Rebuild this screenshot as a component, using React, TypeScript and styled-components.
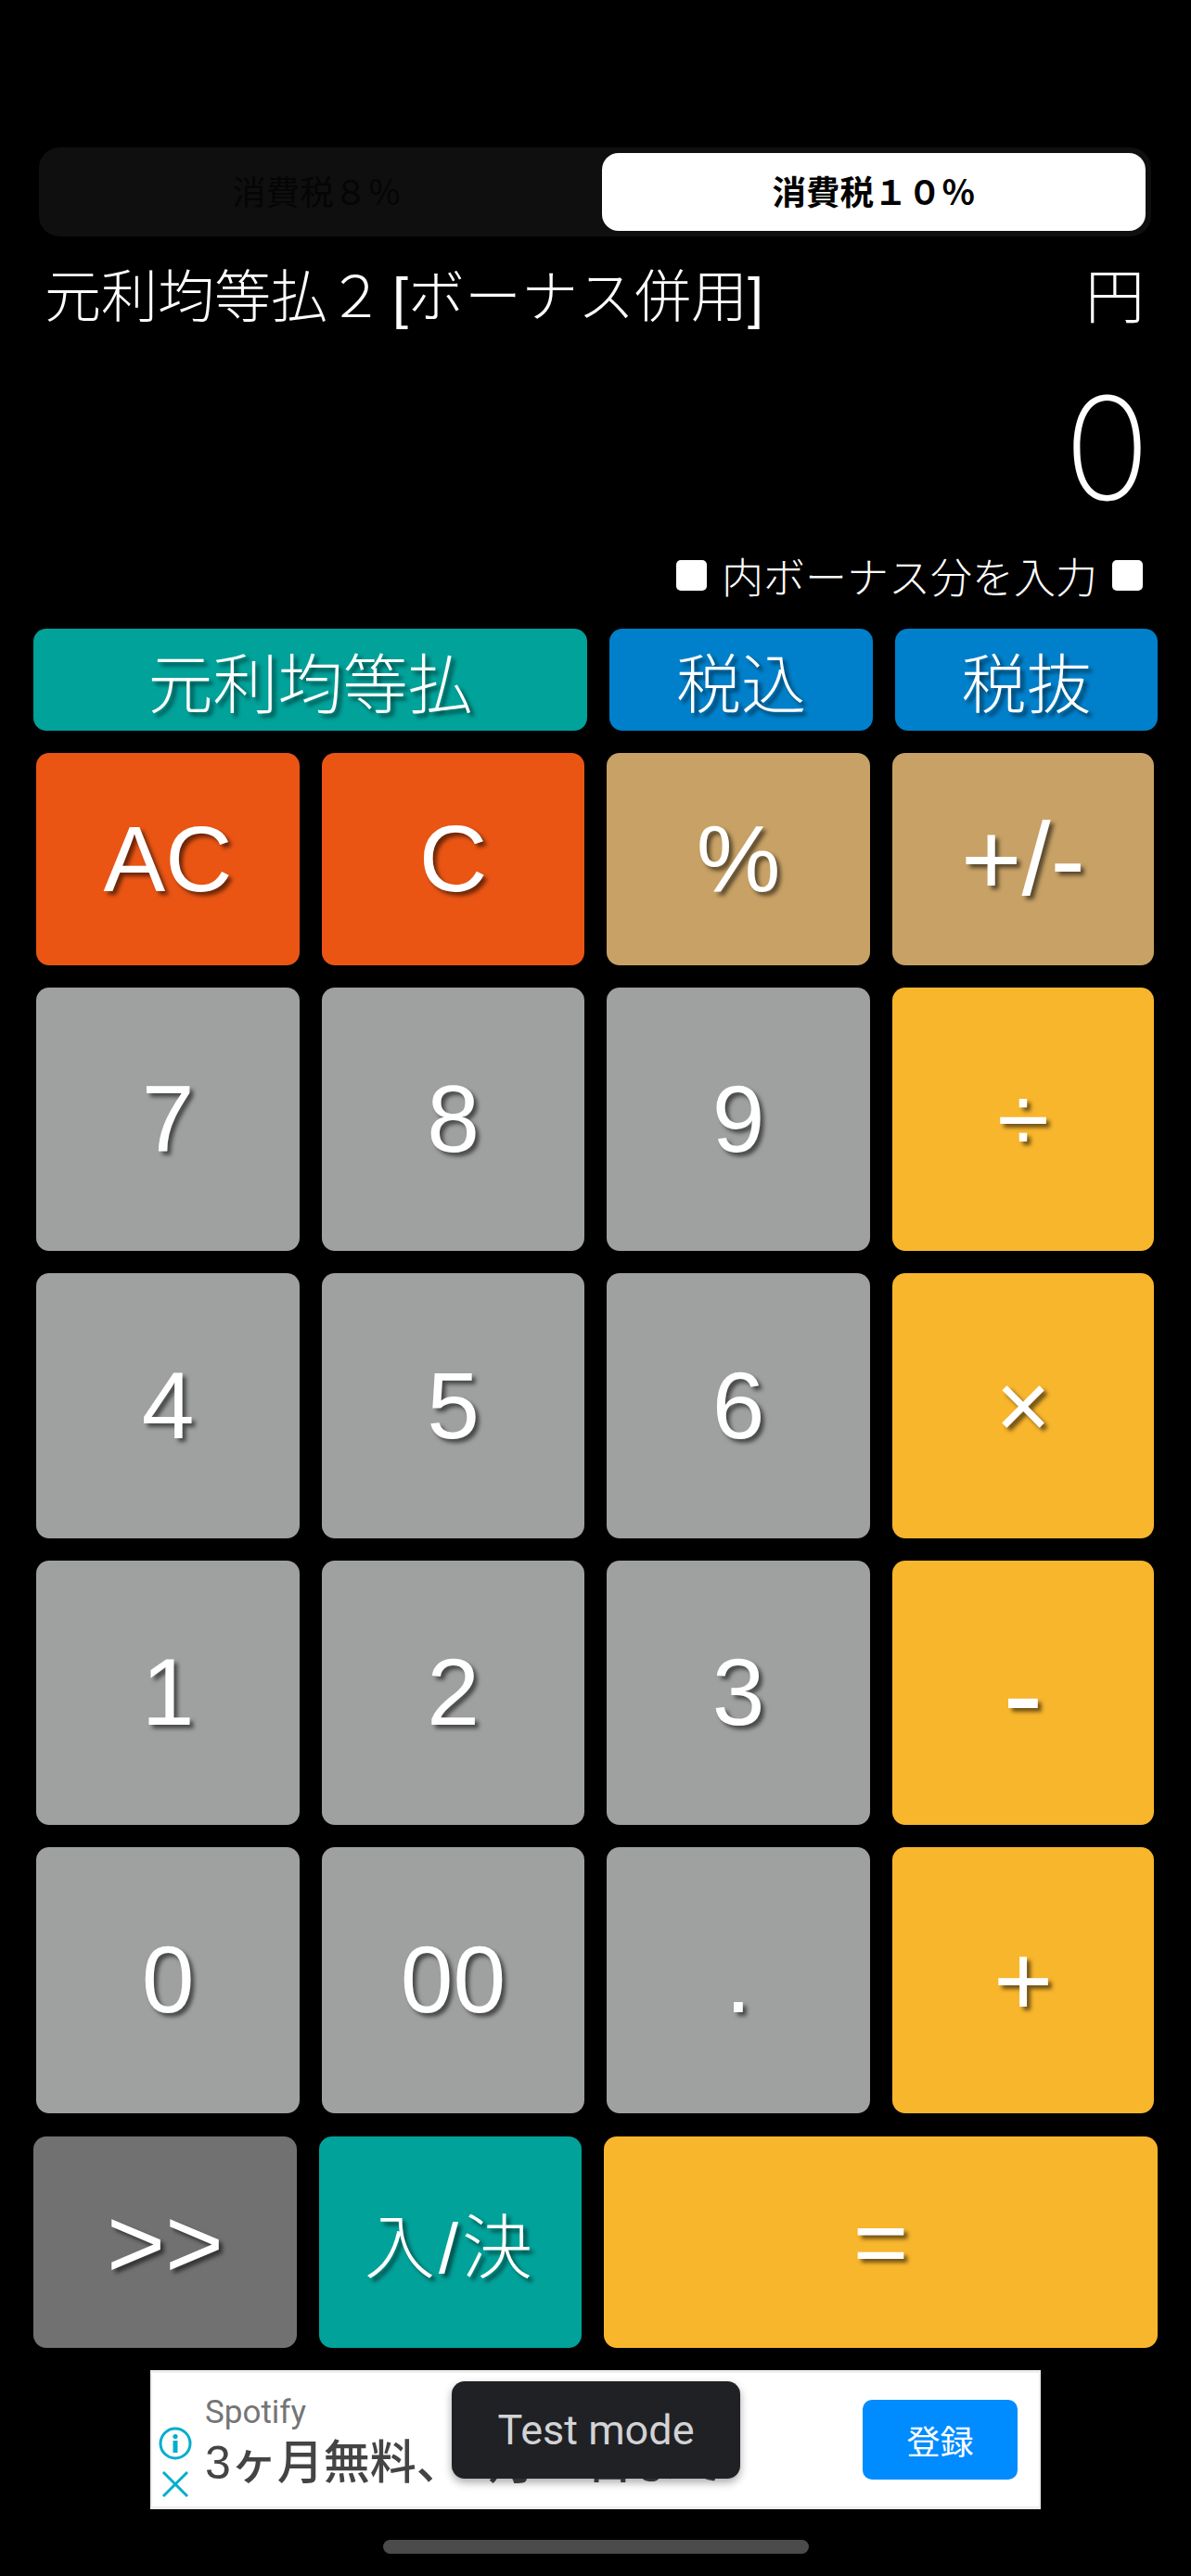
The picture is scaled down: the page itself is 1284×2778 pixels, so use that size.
import React from 'react';
import styled, { createGlobalStyle } from 'styled-components';

const GlobalStyle = createGlobalStyle`
  html, body {
    margin: 0;
    padding: 0;
    background: #000000;
  }
  body {
    font-family: "Liberation Sans", "Noto Sans CJK JP", sans-serif;
  }
`;

const COLORS = {
  orange: '#ea5514',
  tan: '#c7a165',
  gray: '#9fa0a0',
  amber: '#f8b62d',
  teal: '#00a29a',
  blue: '#0080cb',
  dark: '#727171',
};

const Screen = styled.div`
  width: 1284px;
  height: 2778px;
  background: #000000;
  color: #ffffff;
  display: flex;
  flex-direction: column;
  overflow: hidden;
  padding-top: 159px;
  box-sizing: border-box;
`;

const Segments = styled.div`
  margin: 0 43px 0 42px;
  height: 96px;
  box-sizing: border-box;
  padding: 6px;
  background: #0f0f0f;
  border-radius: 22px;
  display: grid;
  grid-template-columns: 1fr 586px;
`;

const Segment = styled.div<{ $active?: boolean }>`
  display: flex;
  align-items: center;
  justify-content: center;
  padding: ${(p) => (p.$active ? '0 0 3px' : '0 14px 3px 0')};
  border-radius: 18px;
  font-size: 36.5px;
  font-weight: ${(p) => (p.$active ? 700 : 400)};
  color: ${(p) => (p.$active ? '#000000' : '#050505')};
  background: ${(p) => (p.$active ? '#ffffff' : 'transparent')};
`;

const TitleRow = styled.div`
  margin-top: 25px;
  padding: 0 50px 0 48px;
  height: 70px;
  display: flex;
  justify-content: space-between;
  align-items: center;
  font-size: 61px;
  font-weight: 300;
  word-spacing: -8px;
  white-space: nowrap;
`;

const Currency = styled.span`
  font-size: 64px;
`;

const Display = styled.div`
  margin-top: 58px;
  padding-right: 44px;
  height: 150px;
  display: flex;
  justify-content: flex-end;
  align-items: center;
  font-family: "Inter", sans-serif;
  font-weight: 200;
  font-size: 154px;
  line-height: 150px;
`;

const BonusRow = styled.div`
  margin-top: 37px;
  padding-right: 52px;
  height: 50px;
  display: flex;
  justify-content: flex-end;
  align-items: center;
  gap: 16px;
  font-size: 45px;
  font-weight: 300;
`;

const Check = styled.span`
  width: 33px;
  height: 33px;
  border-radius: 5px;
  background: #ffffff;
`;

const ModeRow = styled.div`
  margin-top: 33px;
  padding: 0 36px;
  height: 110px;
  display: grid;
  grid-template-columns: 597px 284px 283px;
  gap: 24px;
`;

const Key = styled.div<{ $bg: string; $size?: number; $spacing?: number }>`
  display: flex;
  align-items: center;
  justify-content: center;
  background: ${(p) => p.$bg};
  border-radius: 14px;
  font-size: ${(p) => p.$size ?? 102}px;
  letter-spacing: ${(p) => p.$spacing ?? 0}px;
  font-weight: 300;
  text-shadow: 4px 4px 4px rgba(0, 0, 0, 0.55);
  white-space: nowrap;
`;

const KeyGrid = styled.div`
  margin-top: 24px;
  padding: 0 39px;
  display: grid;
  grid-template-columns: 284px 283px 284px 282px;
  grid-template-rows: 229px 284px 286px 285px 287px;
  column-gap: 24px;
  row-gap: 24px;
`;

const BottomRow = styled.div`
  margin-top: 25px;
  padding: 0 36px;
  height: 228px;
  display: grid;
  grid-template-columns: 284px 283px 597px;
  gap: 24px;
`;

const AdWrap = styled.div`
  position: relative;
  margin: 24px auto 0;
  width: 960px;
  height: 150px;
`;

const Ad = styled.div`
  height: 100%;
  box-sizing: border-box;
  background: #ffffff;
  border: 3px solid #eeeeee;
  border-left-width: 2px;
  border-right-width: 2px;
  display: flex;
  align-items: stretch;
  overflow: hidden;
`;

const AdIcons = styled.div`
  width: 50px;
  padding-bottom: 9px;
  display: flex;
  flex-direction: column;
  justify-content: flex-end;
  align-items: center;
  gap: 11px;
  color: #00aecd;
`;

const AdText = styled.div`
  flex: 1;
  padding: 23px 0 0 7px;
  white-space: nowrap;
  overflow: hidden;
`;

const AdBrand = styled.div`
  font-family: "Roboto", sans-serif;
  font-size: 35px;
  line-height: 40px;
  color: #757575;
`;

const AdHeadline = styled.div`
  font-size: 50px;
  line-height: 62px;
  margin-top: 3px;
  font-weight: 500;
  color: #444444;
`;

const AdButton = styled.div`
  flex: none;
  width: 167px;
  height: 86px;
  margin: 29px 23px 0 0;
  border-radius: 10px;
  background: #008bff;
  color: #ffffff;
  font-size: 36px;
  display: flex;
  align-items: center;
  justify-content: center;
`;

const Toast = styled.div`
  position: absolute;
  left: 325px;
  top: 12px;
  width: 311px;
  height: 105px;
  border-radius: 14px;
  background: #202124;
  color: #d2d3d6;
  font-family: "Roboto", sans-serif;
  font-size: 45px;
  display: flex;
  align-items: center;
  justify-content: center;
  box-shadow: 0 4px 10px rgba(0, 0, 0, 0.35);
`;

const HomeIndicator = styled.div`
  margin: 33px auto 0;
  width: 459px;
  height: 15px;
  border-radius: 8px;
  background: #4b4b4b;
`;

const keys: { label: string; bg: string; size?: number }[] = [
  { label: 'AC', bg: COLORS.orange, size: 100 },
  { label: 'C', bg: COLORS.orange },
  { label: '%', bg: COLORS.tan },
  { label: '+/-', bg: COLORS.tan, size: 112 },
  { label: '7', bg: COLORS.gray },
  { label: '8', bg: COLORS.gray },
  { label: '9', bg: COLORS.gray },
  { label: '÷', bg: COLORS.amber },
  { label: '4', bg: COLORS.gray },
  { label: '5', bg: COLORS.gray },
  { label: '6', bg: COLORS.gray },
  { label: '×', bg: COLORS.amber },
  { label: '1', bg: COLORS.gray },
  { label: '2', bg: COLORS.gray },
  { label: '3', bg: COLORS.gray },
  { label: '-', bg: COLORS.amber, size: 130 },
  { label: '0', bg: COLORS.gray },
  { label: '00', bg: COLORS.gray },
  { label: '.', bg: COLORS.gray },
  { label: '+', bg: COLORS.amber, size: 110 },
];

const InfoIcon = () => (
  <svg width="36" height="36" viewBox="0 0 36 36" fill="none">
    <circle cx="18" cy="18" r="16" stroke="currentColor" strokeWidth="3" />
    <circle cx="18" cy="10.5" r="2.6" fill="currentColor" />
    <rect x="15.5" y="15" width="5" height="13" fill="currentColor" />
  </svg>
);

const CloseIcon = () => (
  <svg width="30" height="30" viewBox="0 0 30 30" fill="none">
    <path d="M2 2 L28 28 M28 2 L2 28" stroke="currentColor" strokeWidth="3" />
  </svg>
);

const App = () => (
  <Screen>
    <GlobalStyle />
    <Segments>
      <Segment>消費税８％</Segment>
      <Segment $active>消費税１０％</Segment>
    </Segments>
    <TitleRow>
      <span>元利均等払２ [ボーナス併用]</span>
      <Currency>円</Currency>
    </TitleRow>
    <Display>0</Display>
    <BonusRow>
      <Check />
      <span>内ボーナス分を入力</span>
      <Check />
    </BonusRow>
    <ModeRow>
      <Key $bg={COLORS.teal} $size={70}>元利均等払</Key>
      <Key $bg={COLORS.blue} $size={70}>税込</Key>
      <Key $bg={COLORS.blue} $size={70}>税抜</Key>
    </ModeRow>
    <KeyGrid>
      {keys.map((k) => (
        <Key key={k.label} $bg={k.bg} $size={k.size}>{k.label}</Key>
      ))}
    </KeyGrid>
    <BottomRow>
      <Key $bg={COLORS.dark} $size={108}>&gt;&gt;</Key>
      <Key $bg={COLORS.teal} $size={76} $spacing={4}>入/決</Key>
      <Key $bg={COLORS.amber}>=</Key>
    </BottomRow>
    <AdWrap>
      <Ad>
        <AdIcons>
          <InfoIcon />
          <CloseIcon />
        </AdIcons>
        <AdText>
          <AdBrand>Spotify</AdBrand>
          <AdHeadline>3ヶ月無料、6月21日まで</AdHeadline>
        </AdText>
        <AdButton>登録</AdButton>
      </Ad>
      <Toast>Test mode</Toast>
    </AdWrap>
    <HomeIndicator />
  </Screen>
);

export default App;
